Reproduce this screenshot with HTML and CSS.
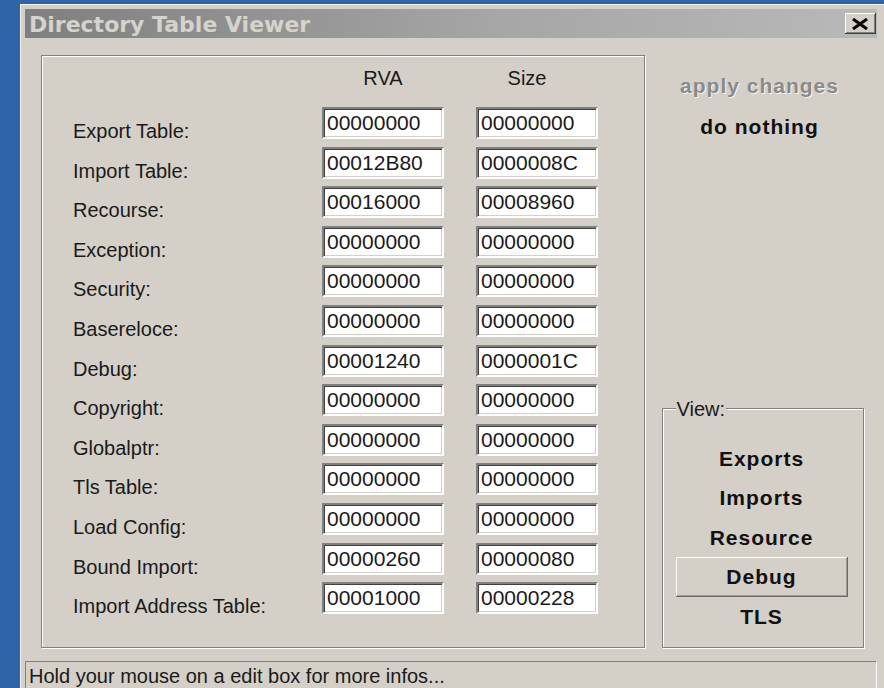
FILE: index.html
```html
<!DOCTYPE html>
<html lang="en">
<head>
<meta charset="utf-8">
<title>Directory Table Viewer</title>
<link rel="stylesheet" href="styles.css">
</head>
<body>
<div class="window">
  <div class="titlebar">
    <span class="title">Directory Table Viewer</span>
    <button class="close" type="button" aria-label="Close">
      <svg width="18" height="12" viewBox="0 0 18 12">
        <path d="M2 1 L16 11 M16 1 L2 11" stroke="#000" stroke-width="3" fill="none"/>
      </svg>
    </button>
  </div>

  <div class="client">
    <div class="dirs">
      <span class="head"></span>
      <span class="head rva">RVA</span>
      <span class="head size">Size</span>

      <label class="name">Export Table:</label>
      <input class="field" type="text" value="00000000" readonly>
      <input class="field" type="text" value="00000000" readonly>

      <label class="name">Import Table:</label>
      <input class="field" type="text" value="00012B80" readonly>
      <input class="field" type="text" value="0000008C" readonly>

      <label class="name">Recourse:</label>
      <input class="field" type="text" value="00016000" readonly>
      <input class="field" type="text" value="00008960" readonly>

      <label class="name">Exception:</label>
      <input class="field" type="text" value="00000000" readonly>
      <input class="field" type="text" value="00000000" readonly>

      <label class="name">Security:</label>
      <input class="field" type="text" value="00000000" readonly>
      <input class="field" type="text" value="00000000" readonly>

      <label class="name">Basereloce:</label>
      <input class="field" type="text" value="00000000" readonly>
      <input class="field" type="text" value="00000000" readonly>

      <label class="name">Debug:</label>
      <input class="field" type="text" value="00001240" readonly>
      <input class="field" type="text" value="0000001C" readonly>

      <label class="name">Copyright:</label>
      <input class="field" type="text" value="00000000" readonly>
      <input class="field" type="text" value="00000000" readonly>

      <label class="name">Globalptr:</label>
      <input class="field" type="text" value="00000000" readonly>
      <input class="field" type="text" value="00000000" readonly>

      <label class="name">Tls Table:</label>
      <input class="field" type="text" value="00000000" readonly>
      <input class="field" type="text" value="00000000" readonly>

      <label class="name">Load Config:</label>
      <input class="field" type="text" value="00000000" readonly>
      <input class="field" type="text" value="00000000" readonly>

      <label class="name">Bound Import:</label>
      <input class="field" type="text" value="00000260" readonly>
      <input class="field" type="text" value="00000080" readonly>

      <label class="name">Import Address Table:</label>
      <input class="field" type="text" value="00001000" readonly>
      <input class="field" type="text" value="00000228" readonly>
    </div>

    <div class="side">
      <div class="actions">
        <div class="flat disabled">apply changes</div>
        <div class="flat">do nothing</div>
      </div>
      <fieldset class="view">
        <legend>View:</legend>
        <div class="flat">Exports</div>
        <div class="flat">Imports</div>
        <div class="flat">Resource</div>
        <div class="flat raised">Debug</div>
        <div class="flat">TLS</div>
      </fieldset>
    </div>
  </div>

  <div class="status">Hold your mouse on a edit box for more infos...</div>
</div>
</body>
</html>
```

FILE: styles.css
```css
html, body {
  margin: 0;
  padding: 0;
}

body {
  width: 884px;
  height: 688px;
  overflow: hidden;
  background: #2f65a8;
  font-family: "Liberation Sans", Arial, sans-serif;
  font-size: 20px;
  color: #1a1a1a;
}

/* dialog frame */
.window {
  box-sizing: border-box;
  width: 864px;
  height: 700px;
  margin: 4px 0 0 20px;
  padding: 4px 7px 0 4px;
  background: #d4d0c8;
  border-top: 1px solid #f4f4f4;
  border-left: 1px solid #f4f4f4;
  display: flex;
  flex-direction: column;
}

/* inactive caption */
.titlebar {
  height: 29px;
  flex: none;
  display: flex;
  align-items: center;
  justify-content: space-between;
  padding: 0 1px 0 4px;
  background: linear-gradient(90deg, #7f7f7f 0%, #a6a6a6 55%, #b9b9b9 100%);
}

.title {
  font-family: "DejaVu Sans", Verdana, sans-serif;
  font-weight: bold;
  font-size: 22px;
  color: #d6d3cd;
  line-height: 29px;
  padding-top: 1px;
}

.close {
  width: 31px;
  height: 21px;
  padding: 0;
  border: 0;
  background: #d4d0c8;
  display: flex;
  align-items: center;
  justify-content: center;
  box-shadow: inset -1px -1px #404040, inset 1px 1px #fff, inset -2px -2px #808080;
}

.close svg {
  display: block;
  margin: 1px 1px 0 0;
}

/* main area */
.client {
  box-sizing: border-box;
  height: 623px;
  flex: none;
  display: flex;
  padding: 17px 0 0 16px;
}

/* etched group of directory entries */
.dirs {
  box-sizing: border-box;
  width: 604px;
  height: 593px;
  border: 1px solid #808080;
  box-shadow: inset 1px 1px #fff, 1px 1px 0 #fff;
  padding: 12px 0 0 31px;
  display: grid;
  grid-template-columns: 217px 122px 122px;
  grid-template-rows: 31.4px repeat(13, 32px);
  column-gap: 32px;
  row-gap: 7.6px;
  align-content: start;
}

.head {
  line-height: 20px;
  align-self: start;
  text-align: center;
}

.head.size {
  padding-right: 20px;
}

.name {
  align-self: end;
  line-height: 20px;
  margin-bottom: -2px;
  white-space: nowrap;
}

.field {
  box-sizing: border-box;
  width: 122px;
  height: 32px;
  margin: 0;
  padding: 0 3px;
  font-family: "Liberation Sans", Arial, sans-serif;
  font-size: 21px;
  color: #1a1a1a;
  background: #fff;
  border: 2px solid;
  border-color: #808080 #fff #fff #808080;
  box-shadow: inset 1px 1px #404040, inset -1px -1px #d4d0c8;
  outline: none;
}

/* right hand column */
.side {
  box-sizing: border-box;
  width: 232px;
  height: 593px;
  display: flex;
  flex-direction: column;
  align-items: center;
}

.actions {
  margin-top: 11px;
  margin-left: -3px;
  display: flex;
  flex-direction: column;
  gap: 1px;
}

.flat {
  box-sizing: border-box;
  width: 172px;
  height: 40px;
  line-height: 40px;
  text-align: center;
  font-weight: bold;
  font-size: 21px;
  letter-spacing: 1px;
  white-space: nowrap;
  color: #111;
}

.flat.disabled {
  color: #8a8a8a;
  text-shadow: 1px 1px 0 #f4f4f4;
}

.view {
  box-sizing: border-box;
  width: 202px;
  margin: auto 0 0 3px;
  padding: 20px 14px 11px 13px;
  border: 1px solid #808080;
  box-shadow: inset 1px 1px #fff, 1px 1px 0 #fff;
  min-inline-size: 0;
}

.view legend {
  padding: 0 1px;
  line-height: 20px;
  background: #d4d0c8;
}

.view .flat {
  height: 39.5px;
  line-height: 39.5px;
}

.flat.raised {
  box-shadow: inset -1px -1px #6a6a6a, inset 1px 1px #fff, inset -2px -2px #a09c94;
}

/* status line */
.status {
  box-sizing: border-box;
  height: 40px;
  flex: none;
  padding: 4px 0 0 3px;
  line-height: 20px;
  border-top: 1px solid #808080;
  border-left: 1px solid #808080;
  border-right: 1px solid #fff;
  white-space: nowrap;
}
```
